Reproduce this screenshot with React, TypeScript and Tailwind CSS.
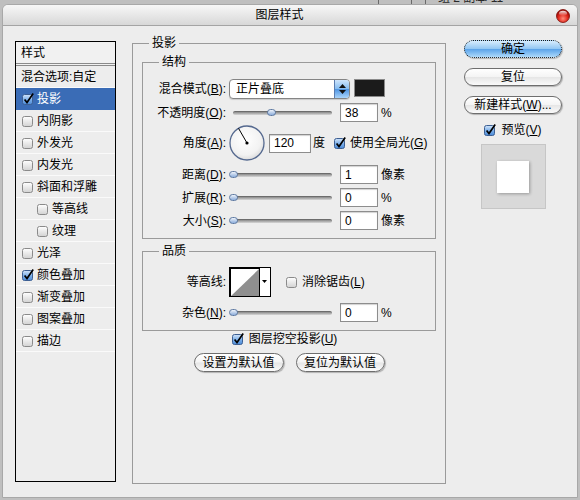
import React from 'react';

const FONT = "font-['Liberation_Sans','Noto_Sans_CJK_SC',sans-serif]";

const STYLES = [
  { label: '投影', checked: true, selected: true },
  { label: '内阴影' },
  { label: '外发光' },
  { label: '内发光' },
  { label: '斜面和浮雕' },
  { label: '等高线', indent: true },
  { label: '纹理', indent: true },
  { label: '光泽' },
  { label: '颜色叠加', checked: true },
  { label: '渐变叠加' },
  { label: '图案叠加' },
  { label: '描边' },
];

// mac aqua checkbox
function Check({ on }: { on?: boolean }) {
  return (
    <svg width="12" height="12" viewBox="0 0 12 12" className="shrink-0">
      <defs>
        <linearGradient id="cbOff" x1="0" y1="0" x2="0" y2="1">
          <stop offset="0" stopColor="#ffffff" />
          <stop offset="1" stopColor="#d2d2d2" />
        </linearGradient>
        <linearGradient id="cbOn" x1="0" y1="0" x2="0" y2="1">
          <stop offset="0" stopColor="#d4e6fa" />
          <stop offset="0.5" stopColor="#7fb1ea" />
          <stop offset="1" stopColor="#4a8ad8" />
        </linearGradient>
      </defs>
      <rect x="0.5" y="1.5" width="10" height="10" rx="2" fill={on ? 'url(#cbOn)' : 'url(#cbOff)'} stroke={on ? '#3d5f92' : '#8a8a8a'} />
      {on && <path d="M2.6 6.4 L5 9.6 L11.2 0.6" fill="none" stroke="#000" strokeWidth="1.7" />}
    </svg>
  );
}

function Mn({ text, k }: { text: string; k: string }) {
  return (
    <>
      {text}(<span className="underline">{k}</span>)
    </>
  );
}

function AquaButton({ children, primary, className = '' }: { children: React.ReactNode; primary?: boolean; className?: string }) {
  const skin = primary
    ? 'border-dotted border-[#1a1a1a] bg-[linear-gradient(#d6ecfd,#93c7f3_48%,#5ba3e9_52%,#acd9fb)]'
    : 'border-[#6e6e6e] bg-[linear-gradient(#ffffff,#f4f4f4_48%,#e6e6e6_52%,#fafafa)]';
  return (
    <button
      type="button"
      className={`h-[18px] rounded-full border flex items-center justify-center leading-none shadow-[1px_1px_1px_rgba(0,0,0,0.25)] ${skin} ${className}`}
    >
      {children}
    </button>
  );
}

function Field({ value, wide }: { value: string; wide?: boolean }) {
  return (
    <div
      className={`${wide ? 'w-[42px]' : 'w-[38px]'} h-[19px] shrink-0 bg-white border border-[#8d8d8d] shadow-[inset_0_1px_1px_rgba(0,0,0,0.18)] pl-[4px] flex items-center leading-none`}
    >
      {value}
    </div>
  );
}

function Slider({ value }: { value: number }) {
  return (
    <div className="w-[111px] h-full shrink-0 pl-[4px] pr-[8px] flex items-center">
      <div className="relative w-full h-[4px] rounded-full border-t border-[#6c6c6c] bg-gradient-to-b from-[#8a8a8a] to-[#d8d8d8]">
        <div
          className="absolute top-[-3px] w-[9px] h-[7px] rounded-[4px] border border-[#5d79a2] bg-gradient-to-b from-[#eef3fa] to-[#8eaedb]"
          style={{ left: `calc(${value}% - 4px)` }}
        />
      </div>
    </div>
  );
}

function Row({ label, className, children }: { label: React.ReactNode; className: string; children: React.ReactNode }) {
  return (
    <div className={`flex items-center ${className}`}>
      <div className="w-[83px] mr-[3px] shrink-0 text-right whitespace-nowrap">{label}</div>
      {children}
    </div>
  );
}

function Dial() {
  return (
    <svg width="36" height="36" viewBox="0 0 36 36" className="shrink-0">
      <defs>
        <radialGradient id="dialFill" cx="0.45" cy="0.4" r="0.65">
          <stop offset="0" stopColor="#ffffff" />
          <stop offset="0.7" stopColor="#f2f2f2" />
          <stop offset="1" stopColor="#d6d6d6" />
        </radialGradient>
      </defs>
      <circle cx="18" cy="18" r="17" fill="url(#dialFill)" stroke="#55698f" strokeWidth="1.3" />
      <line x1="18" y1="18" x2="9.5" y2="3.3" stroke="#000" strokeWidth="1" />
      <circle cx="18" cy="18" r="1.6" fill="#000" />
    </svg>
  );
}

function BlendSelect() {
  return (
    <div className="w-[121px] h-[20px] shrink-0 rounded-[4px] border border-[#858585] bg-white flex overflow-hidden shadow-[0_1px_1px_rgba(0,0,0,0.15)]">
      <div className="flex-1 pl-[6px] flex items-center">正片叠底</div>
      <div className="w-[15px] border-l border-[#5a7cb0] bg-[linear-gradient(#cfe5fc,#86bdf1_48%,#4f95e3_52%,#a9d4fb)] flex flex-col items-center justify-center gap-[2px]">
        <svg width="7" height="4" viewBox="0 0 7 4">
          <polygon points="3.5,0 7,4 0,4" fill="#111" />
        </svg>
        <svg width="7" height="4" viewBox="0 0 7 4">
          <polygon points="0,0 7,0 3.5,4" fill="#111" />
        </svg>
      </div>
    </div>
  );
}

function Contour() {
  return (
    <svg width="42" height="30" viewBox="0 0 42 30" className="shrink-0">
      <rect x="0.5" y="0.5" width="41" height="29" fill="#fff" stroke="#000" />
      <line x1="1.5" y1="1" x2="1.5" y2="29" stroke="#000" />
      <line x1="1" y1="1.5" x2="30" y2="1.5" stroke="#000" />
      <polygon points="2,29 30,2 30,29" fill="#8f8f8f" />
      <line x1="30.5" y1="0" x2="30.5" y2="30" stroke="#000" />
      <polygon points="33,13 38,13 35.5,16" fill="#000" />
    </svg>
  );
}

function BackStrip() {
  return (
    <div className="h-[4px] overflow-hidden flex items-start text-[#2a2a2a] leading-[14px]">
      <div className="w-[378px] shrink-0" />
      <div className="w-px h-[4px] bg-[#6a6a6a] shrink-0" />
      <span className="ml-[10px] -mt-[10px]">ˇ</span>
      <div className="ml-[18px] w-px h-[4px] bg-[#6a6a6a] shrink-0" />
      <div className="ml-[13px] w-px h-[4px] bg-[#6a6a6a] shrink-0" />
      <span className="ml-[12px] -mt-[9px] whitespace-nowrap">组 2 副本 11</span>
    </div>
  );
}

function TitleBar() {
  return (
    <div className="h-[21px] shrink-0 border-b border-[#a4a4a4] bg-gradient-to-b from-[#f7f7f7] to-[#d8d8d8] flex items-center">
      <div className="flex-1 text-center leading-none">图层样式</div>
      <svg width="14" height="14" viewBox="0 0 14 14" className="mr-[7px] mt-[1px] shrink-0">
        <defs>
          <radialGradient id="closeRed" cx="0.5" cy="0.7" r="0.6">
            <stop offset="0" stopColor="#ff8a7a" />
            <stop offset="0.6" stopColor="#e0281c" />
            <stop offset="1" stopColor="#9a0c06" />
          </radialGradient>
          <linearGradient id="closeShine" x1="0" y1="0" x2="0" y2="1">
            <stop offset="0" stopColor="#ffffff" stopOpacity="0.9" />
            <stop offset="1" stopColor="#ffffff" stopOpacity="0" />
          </linearGradient>
        </defs>
        <circle cx="7" cy="7" r="6.5" fill="url(#closeRed)" stroke="#7a0a05" strokeWidth="0.8" />
        <ellipse cx="7" cy="4.3" rx="4" ry="2.6" fill="url(#closeShine)" />
      </svg>
    </div>
  );
}

function StyleList() {
  return (
    <div className="mt-[5px] w-[101px] h-[441px] shrink-0 border border-black bg-[#ededed]">
      <div className="h-[24px] pl-[5px] flex items-center bg-[#f1f1f1] border-b-[3px] border-double border-[#8a8a8a]">样式</div>
      <div className="h-[22px] pl-[5px] flex items-center border-b border-[#fafafa]">混合选项:自定</div>
      {STYLES.map((s) => (
        <div
          key={s.label}
          className={`h-[22px] flex items-center gap-[3px] border-b ${s.indent ? 'pl-[21px]' : 'pl-[6px]'} ${
            s.selected ? 'bg-[#3a6cb6] text-white border-[#3a6cb6]' : 'border-[#fafafa]'
          }`}
        >
          <Check on={s.checked} />
          <span>{s.label}</span>
        </div>
      ))}
    </div>
  );
}

function MainPanel() {
  return (
    <fieldset className="ml-[16px] w-[314px] h-[448px] shrink-0 border border-[#9a9a9a] px-[9px] pt-[5px]">
      <legend className="ml-[7px] px-[3px] leading-[14px]">投影</legend>

      <fieldset className="border border-[#9a9a9a] pt-[10px] pb-[8px]">
        <legend className="ml-[16px] px-[3px] leading-[14px]">结构</legend>
        <Row label={<><Mn text="混合模式" k="B" />:</>} className="h-[20px]">
          <BlendSelect />
          <div className="ml-[4px] w-[31px] h-[18px] self-start border border-[#8a8a8a] bg-[#1b1b1b]" />
        </Row>
        <Row label={<><Mn text="不透明度" k="O" />:</>} className="h-[19px] mt-[4px]">
          <Slider value={38} />
          <Field value="38" />
          <span className="ml-[3px]">%</span>
        </Row>
        <Row label={<><Mn text="角度" k="A" />:</>} className="h-[36px] mt-[3px]">
          <Dial />
          <div className="ml-[4px]">
            <Field value="120" wide />
          </div>
          <span className="ml-[2px]">度</span>
          <div className="ml-[9px] flex items-center gap-[4px]">
            <Check on />
            <span>
              <Mn text="使用全局光" k="G" />
            </span>
          </div>
        </Row>
        <Row label={<><Mn text="距离" k="D" />:</>} className="h-[19px] mt-[4px]">
          <Slider value={0} />
          <Field value="1" />
          <span className="ml-[3px]">像素</span>
        </Row>
        <Row label={<><Mn text="扩展" k="R" />:</>} className="h-[19px] mt-[4px]">
          <Slider value={0} />
          <Field value="0" />
          <span className="ml-[3px]">%</span>
        </Row>
        <Row label={<><Mn text="大小" k="S" />:</>} className="h-[19px] mt-[4px]">
          <Slider value={0} />
          <Field value="0" />
          <span className="ml-[3px]">像素</span>
        </Row>
      </fieldset>

      <fieldset className="mt-[5px] border border-[#9a9a9a] pt-[9px] pb-[8px]">
        <legend className="ml-[16px] px-[3px] leading-[14px]">品质</legend>
        <Row label="等高线:" className="h-[30px]">
          <Contour />
          <div className="ml-[15px] flex items-center gap-[4px]">
            <Check />
            <span>
              <Mn text="消除锯齿" k="L" />
            </span>
          </div>
        </Row>
        <Row label={<><Mn text="杂色" k="N" />:</>} className="h-[19px] mt-[6px]">
          <Slider value={0} />
          <Field value="0" />
          <span className="ml-[3px]">%</span>
        </Row>
      </fieldset>

      <div className="mt-[1px] h-[14px] pr-[9px] flex items-center justify-center gap-[5px]">
        <Check on />
        <span>
          <Mn text="图层挖空投影" k="U" />
        </span>
      </div>
      <div className="mt-[7px] flex justify-center gap-[12px]">
        <AquaButton className="w-[90px] h-[19px]">设置为默认值</AquaButton>
        <AquaButton className="w-[89px] h-[19px]">复位为默认值</AquaButton>
      </div>
    </fieldset>
  );
}

function RightColumn() {
  return (
    <div className="ml-[18px] mt-[4px] w-[98px] shrink-0 flex flex-col">
      <AquaButton primary>确定</AquaButton>
      <AquaButton className="mt-[10px]">复位</AquaButton>
      <AquaButton className="mt-[10px]">
        新建样式(<span className="underline">W</span>)...
      </AquaButton>
      <div className="mt-[9px] h-[14px] flex items-center justify-center gap-[5px]">
        <Check on />
        <span>
          <Mn text="预览" k="V" />
        </span>
      </div>
      <div className="mt-[7px] self-center w-[65px] h-[65px] bg-[#d9d9d9] border border-[#c6c6c6] flex items-center justify-center">
        <div className="w-[32px] h-[32px] bg-white shadow-[1px_1px_3px_rgba(0,0,0,0.3)]" />
      </div>
    </div>
  );
}

export default function App() {
  return (
    <div className={`w-[580px] h-[500px] bg-[#bfbfbf] overflow-hidden text-[12px] text-black ${FONT}`}>
      <BackStrip />
      <div className="ml-[2px] w-[576px] h-[494px] border border-[#a8a8a8] rounded-t-[6px] bg-[#ededed] flex flex-col overflow-hidden">
        <TitleBar />
        <div className="flex items-start px-[12px] pt-[10px]">
          <StyleList />
          <MainPanel />
          <RightColumn />
        </div>
      </div>
    </div>
  );
}
